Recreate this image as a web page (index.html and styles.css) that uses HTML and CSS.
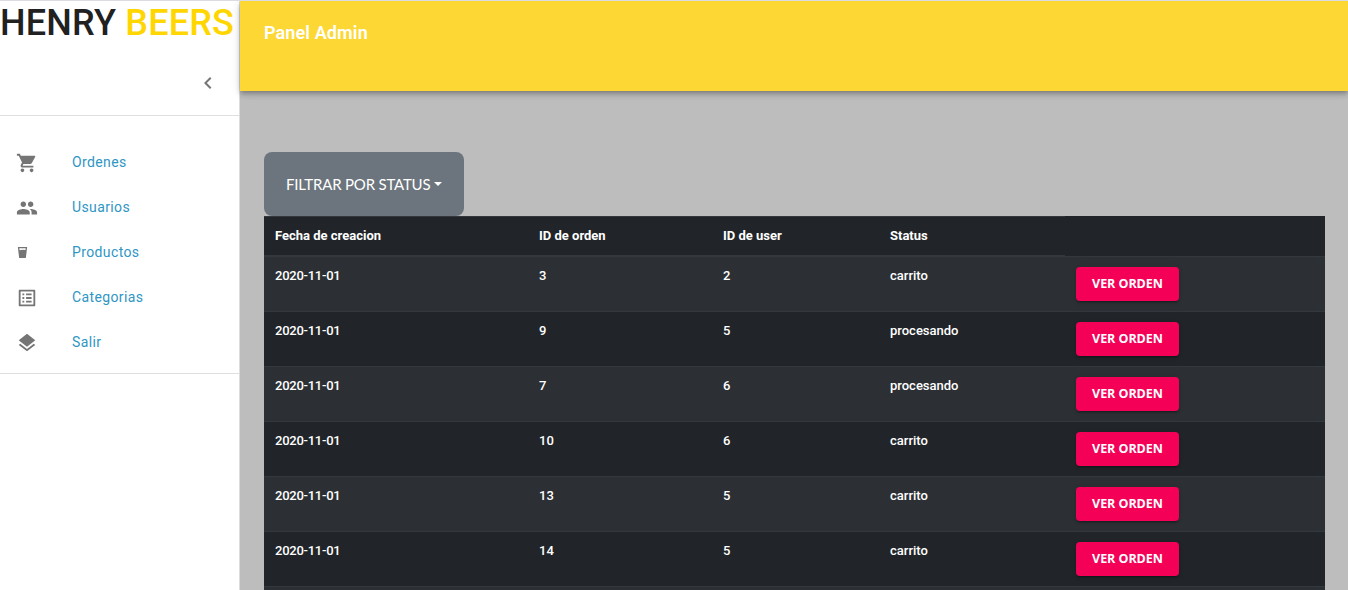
FILE: index.html
```html
<!DOCTYPE html>
<html lang="es">
<head>
<meta charset="utf-8">
<title>Henry Beers</title>
<link rel="stylesheet" href="styles.css">
</head>
<body>
<div class="app">
  <aside class="sidebar">
    <h1 class="brand">HENRY <span class="brand-accent">BEERS</span></h1>
    <div class="collapse"><svg class="icon" viewBox="0 0 24 24"><path d="M15.41 7.41L14 6l-6 6 6 6 1.41-1.41L10.83 12z"/></svg></div>
    <nav class="menu">
      <a class="item"><svg class="icon" viewBox="0 0 24 24"><path d="M7 18c-1.1 0-1.99.9-1.99 2S5.9 22 7 22s2-.9 2-2-.9-2-2-2zM1 2v2h2l3.6 7.59-1.35 2.45c-.16.28-.25.61-.25.96 0 1.1.9 2 2 2h12v-2H7.42c-.14 0-.25-.11-.25-.25l.03-.12.9-1.63h7.45c.75 0 1.41-.41 1.75-1.03l3.58-6.49c.08-.14.12-.31.12-.48 0-.55-.45-1-1-1H5.21l-.94-2H1zm16 16c-1.1 0-1.99.9-1.99 2s.89 2 1.99 2 2-.9 2-2-.9-2-2-2z"/></svg><span class="label">Ordenes</span></a>
      <a class="item"><svg class="icon" viewBox="0 0 24 24"><path d="M16 11c1.66 0 2.99-1.34 2.99-3S17.66 5 16 5c-1.66 0-3 1.34-3 3s1.34 3 3 3zm-8 0c1.66 0 2.99-1.34 2.99-3S9.66 5 8 5C6.34 5 5 6.34 5 8s1.34 3 3 3zm0 2c-2.33 0-7 1.17-7 3.5V19h14v-2.500c0-2.330-4.670-3.500-7-3.500zm8 0c-.29 0-.62.02-.97.05 1.160.84 1.970 1.970 1.970 3.450V19h6v-2.500c0-2.330-4.670-3.500-7-3.500z"/></svg><span class="label">Usuarios</span></a>
      <a class="item"><svg class="icon icon-small" viewBox="0 0 14 14"><path fill-rule="evenodd" d="M2 .5h10l-1.400 12h-7.200zM3.600 2l.25 2 3.150-.6 3.200.3.200-1.700z"/></svg><span class="label">Productos</span></a>
      <a class="item"><svg class="icon" viewBox="0 0 24 24"><path d="M19 5v14H5V5h14m1.100-2H3.900c-.5 0-.9.4-.9.9v16.200c0 .4.4.9.9.9h16.200c.4 0 .9-.5.9-.9V3.900c0-.5-.5-.9-.9-.9zM11 7h6v2h-6V7zm0 4h6v2h-6v-2zm0 4h6v2h-6zM7 7h2v2H7zm0 4h2v2H7zm0 4h2v2H7z"/></svg><span class="label">Categorias</span></a>
      <a class="item"><svg class="icon" viewBox="0 0 24 24"><path d="M11.990 18.540l-7.370-5.730L3 14.070l9 7 9-7-1.630-1.270-7.380 5.740zM12 16l7.360-5.730L21 9l-9-7-9 7 1.630 1.270L12 16z"/></svg><span class="label">Salir</span></a>
    </nav>
  </aside>
  <div class="main">
    <header class="topbar"><h2 class="title">Panel Admin</h2></header>
    <main class="content">
      <button class="filter"><span class="filter-text">FILTRAR POR STATUS</span><span class="caret"></span></button>
      <div class="table">
        <div class="row head"><span class="cell">Fecha de creacion</span><span class="cell">ID de orden</span><span class="cell">ID de user</span><span class="cell">Status</span><span></span></div>
        <div class="row"><span class="cell date">2020-11-01</span><span class="cell">3</span><span class="cell">2</span><span class="cell">carrito</span><span class="cell"><button class="view">VER ORDEN</button></span></div>
        <div class="row"><span class="cell date">2020-11-01</span><span class="cell">9</span><span class="cell">5</span><span class="cell">procesando</span><span class="cell"><button class="view">VER ORDEN</button></span></div>
        <div class="row"><span class="cell date">2020-11-01</span><span class="cell">7</span><span class="cell">6</span><span class="cell">procesando</span><span class="cell"><button class="view">VER ORDEN</button></span></div>
        <div class="row"><span class="cell date">2020-11-01</span><span class="cell">10</span><span class="cell">6</span><span class="cell">carrito</span><span class="cell"><button class="view">VER ORDEN</button></span></div>
        <div class="row"><span class="cell date">2020-11-01</span><span class="cell">13</span><span class="cell">5</span><span class="cell">carrito</span><span class="cell"><button class="view">VER ORDEN</button></span></div>
        <div class="row"><span class="cell date">2020-11-01</span><span class="cell">14</span><span class="cell">5</span><span class="cell">carrito</span><span class="cell"><button class="view">VER ORDEN</button></span></div>
        <div class="row"></div>
      </div>
    </main>
  </div>
</div>
</body>
</html>
```
FILE: styles.css
```css
* { box-sizing: border-box; }
body { margin: 0; font-family: Roboto, sans-serif; background: #bdbdbd; }
.app { display: flex; height: 590px; overflow: hidden; border-top: 1px solid #dadce0; }
.sidebar { width: 240px; flex: none; background: #fff; border-right: 1px solid #dcdcdc; }
.brand { margin: 0; height: 50px; font-size: 36px; line-height: 45px; letter-spacing: .18px; font-weight: 500; color: #212121; white-space: nowrap; }
.brand-accent { color: #ffd600; }
.icon { width: 22px; height: 22px; flex: none; fill: #757575; }
.collapse { height: 65px; border-bottom: 1px solid #dfdfdf; padding: 20px 19px 0 0; display: flex; justify-content: flex-end; }
.collapse .icon { width: 24px; height: 24px; }
.menu { padding: 24px 0 8px; height: 258px; border-bottom: 1px solid #dfdfdf; }
.item { display: flex; align-items: center; height: 45px; padding-left: 16px; }
.item .icon-small { width: 13px; height: 14px; margin-right: 9px; }
.label { margin-left: 34px; padding-bottom: 2px; font-size: 14px; line-height: 20px; letter-spacing: .38px; color: #2f96c4; }
.main { flex: 1; min-width: 0; background: #bdbdbd; }
.topbar { position: relative; height: 90px; padding: 20px 24px; background: #fdd835; box-shadow: 0 2px 4px -1px rgba(0,0,0,.2), 0 4px 5px rgba(0,0,0,.14), 0 1px 10px rgba(0,0,0,.12); }
.title { margin: 0; font-size: 18px; line-height: 24px; letter-spacing: .12px; font-weight: 600; color: #fff; }
.content { padding: 61px 23px 0 24px; }
.filter { display: flex; align-items: center; width: 200px; height: 64px; padding: 0 0 0 22px; border: 0; border-radius: 8px; background: #6c757d; color: #fff; font: 15px Lato, sans-serif; }
.filter-text { white-space: nowrap; letter-spacing: -.2px; }
.caret { margin-left: 4px; border: 4px solid transparent; border-top-color: #fff; border-bottom: 0; }
.table { color: #fff; font-size: 13px; line-height: 20px; font-weight: 500; }
.row { display: grid; grid-template-columns: 264px 184px 167px 186px 1fr; height: 55px; border-top: 1px solid #32383e; background: #212529; }
.row:nth-child(even) { background: #2c3034; }
.cell { padding: 9px 11px 0; }
.date { letter-spacing: -.25px; }
.head { height: 40px; border-top: 0; font-weight: 700; }
.head .cell { border-top: 1px solid #32383e; border-bottom: 1px solid #32383e; }
.view { display: block; width: 103px; height: 34px; margin-top: 1px; padding: 0; border: 0; border-radius: 4px; background: #f50057; color: #fff; font: 700 12.5px/34px "Open Sans", sans-serif; letter-spacing: -.05px; box-shadow: 0 3px 1px -2px rgba(0,0,0,.2), 0 2px 2px rgba(0,0,0,.14), 0 1px 5px rgba(0,0,0,.12); }
```
